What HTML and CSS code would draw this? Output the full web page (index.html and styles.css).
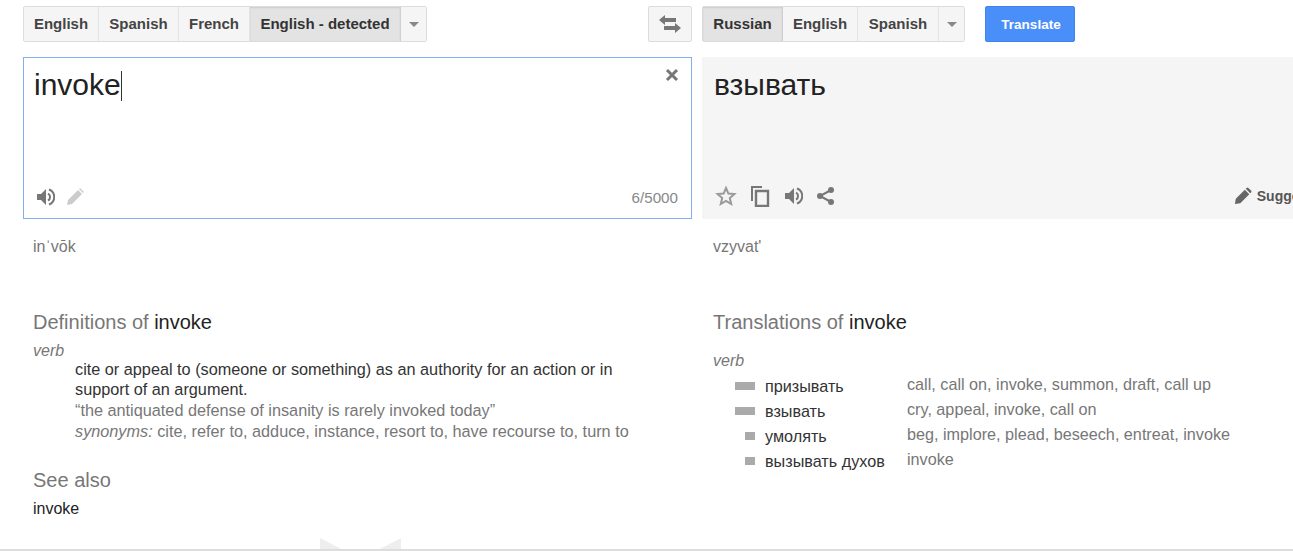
FILE: index.html
```html
<!DOCTYPE html>
<html lang="en">
<head>
    <meta charset="UTF-8">
    <meta name="viewport" content="width=device-width, initial-scale=1.0">
    <title>Translate</title>
    <link rel="stylesheet" href="styles.css">
</head>
<body>
    <div class="page">
        <div class="column column-left">
            <div class="toolbar toolbar-left">
                <div class="btn-group">
                    <button class="lang lang-en">English</button>
                    <button class="lang lang-es">Spanish</button>
                    <button class="lang lang-fr">French</button>
                    <button class="lang lang-detected active">English - detected</button>
                    <button class="lang lang-more"><span class="caret"></span></button>
                </div>
                <button class="swap">
                    <svg width="24" height="20" viewBox="0 0 24 20"><path fill="#777" d="M1 6l6-5v3h11v4H7v3z"/><path fill="#777" d="M23 14l-6-5v3H6v4h11v3z"/></svg>
                </button>
            </div>
            <div class="box box-source">
                <div class="box-text">invoke<span class="cursor"></span></div>
                <svg class="clear" width="14" height="14" viewBox="0 0 14 14"><path d="M2 2l10 10M12 2L2 12" stroke="#777" stroke-width="3"/></svg>
                <div class="box-foot">
                    <svg width="20" height="20" viewBox="0 0 20 20"><path fill="#777" d="M2 7v6h4l5 5V2L6 7z"/><path fill="none" stroke="#777" stroke-width="2" d="M13 6.5a4 4 0 0 1 0 7M14 2.5a8 8 0 0 1 0 15"/></svg>
                    <svg class="pencil-light" width="20" height="20" viewBox="0 0 20 20"><path fill="#ccc" d="M2 18l1-5L13 3l4 4L7 17zM14 2l1-1 4 4-1 1z"/></svg>
                    <span class="count">6/5000</span>
                </div>
            </div>
            <div class="phonetic">in<span class="stress">ˈ</span>vōk</div>
            <h3 class="section-title">Definitions of <b>invoke</b></h3>
            <div class="pos pos-def">verb</div>
            <div class="definition">
                <div class="gloss">cite or appeal to (someone or something) as an authority for an action or in support of an argument.</div>
                <div class="example">“the antiquated defense of insanity is rarely invoked today”</div>
                <div class="example"><i>synonyms:</i> cite, refer to, adduce, instance, resort to, have recourse to, turn to</div>
            </div>
            <h3 class="section-title see-also">See also</h3>
            <div class="see-word">invoke</div>
        </div>
        <div class="column column-right">
            <div class="toolbar">
                <div class="btn-group">
                    <button class="lang lang-ru active">Russian</button>
                    <button class="lang lang-en">English</button>
                    <button class="lang lang-es2">Spanish</button>
                    <button class="lang lang-more"><span class="caret"></span></button>
                </div>
                <button class="translate">Translate</button>
            </div>
            <div class="box box-result">
                <div class="box-text result-text">взывать</div>
                <div class="box-foot result-foot">
                    <svg width="22" height="22" viewBox="0 0 22 22"><path fill="#f5f5f5" stroke="#999" stroke-width="2" d="M11 3l2.400 5.600 6 .5-4.600 4 1.400 5.900-5.200-3.100L5.800 19l1.400-5.900-4.600-4 6-.5z"/></svg>
                    <svg width="22" height="22" viewBox="0 0 22 22"><path fill="none" stroke="#777" stroke-width="2" d="M3 16V2h10"/><path fill="none" stroke="#777" stroke-width="2.400" d="M7 6h12v15H7z"/></svg>
                    <svg width="20" height="20" viewBox="0 0 20 20"><path fill="#777" d="M2 7v6h4l5 5V2L6 7z"/><path fill="none" stroke="#777" stroke-width="2" d="M13 6.500a4 4 0 0 1 0 7M14 2.500a8 8 0 0 1 0 15"/></svg>
                    <svg width="20" height="20" viewBox="0 0 20 20"><path fill="none" stroke="#777" stroke-width="2" d="M16 4L5 10l11 6"/><circle cx="16" cy="4" r="3" fill="#777"/><circle cx="5" cy="10" r="3" fill="#777"/><circle cx="16" cy="16" r="3" fill="#777"/></svg>
                    <span class="suggest">
                        <svg width="18" height="18" viewBox="0 0 20 20"><path fill="#666" d="M1 19l1-6L12 3l5 5L7 18zM13 2l1-1a1.500 1.500 0 0 1 2 0l3 3a1.500 1.500 0 0 1 0 2l-1 1z"/></svg>
                        <b>Suggest an edit</b>
                    </span>
                </div>
            </div>
            <div class="phonetic">vzyvat'</div>
            <h3 class="section-title">Translations of <b>invoke</b></h3>
            <div class="pos pos-trans">verb</div>
            <div class="dict">
                <span class="bar bar-wide"></span><span class="word">призывать</span><span class="rev">call, call on, invoke, summon, draft, call up</span>
                <span class="bar bar-wide"></span><span class="word">взывать</span><span class="rev">cry, appeal, invoke, call on</span>
                <span class="bar"></span><span class="word">умолять</span><span class="rev">beg, implore, plead, beseech, entreat, invoke</span>
                <span class="bar"></span><span class="word">вызывать духов</span><span class="rev">invoke</span>
            </div>
        </div>
        <div class="chevron"></div>
    </div>
</body>
</html>
```

FILE: styles.css
```css
html, body {
    margin: 0;
    padding: 0;
    background: #fff;
    overflow: hidden;
}

body {
    font-family: "Liberation Sans", Arial, sans-serif;
    color: #222;
}

.page {
    position: relative;
    box-sizing: border-box;
    width: 1293px;
    height: 551px;
    overflow: hidden;
    padding: 6px 0 0 23px;
    display: flex;
    gap: 10px;
    border-bottom: 2px solid #ddd;
}

.column-left {
    width: 669px;
    flex: none;
}

.column-right {
    flex: none;
    width: 660px;
}

.toolbar {
    display: flex;
    height: 36px;
    margin-bottom: 15px;
}

.toolbar-left {
    justify-content: space-between;
}

.btn-group {
    display: flex;
    border: 1px solid #dcdcdc;
    border-radius: 2px;
    box-sizing: border-box;
    height: 36px;
}

button {
    font-family: "Liberation Sans", Arial, sans-serif;
    cursor: pointer;
    padding: 0;
}

.lang {
    font-size: 15px;
    font-weight: bold;
    color: #444;
    background: #f5f5f5;
    border: none;
    border-right: 1px solid #e3e3e3;
    padding-bottom: 2px;
}

.lang:last-child {
    border-right: none;
}

.lang.active {
    color: #333;
    background: #e3e3e3;
    border-right: 1px solid #d0d0d0;
    box-shadow: inset 0 1px 2px rgba(0,0,0,0.1);
}

.lang-en { width: 75px; }
.lang-es { width: 80px; }
.lang-fr { width: 71px; }
.lang-detected { width: 151px; }
.lang-more { width: 25px; }
.lang-ru { width: 80px; }
.lang-es2 { width: 81px; }

.caret {
    display: inline-block;
    border-left: 5px solid transparent;
    border-right: 5px solid transparent;
    border-top: 5px solid #888;
    vertical-align: middle;
}

.swap {
    width: 44px;
    height: 36px;
    background: #f5f5f5;
    border: 1px solid #dcdcdc;
    border-radius: 2px;
    display: flex;
    align-items: center;
    justify-content: center;
}

.translate {
    width: 90px;
    height: 36px;
    margin-left: 20px;
    padding-left: 2px;
    background: #4a8ef8;
    border: 1px solid #3f84f0;
    border-radius: 2px;
    color: #fff;
    font-size: 13.5px;
    font-weight: bold;
}

.box {
    position: relative;
    box-sizing: border-box;
    height: 162px;
}

.box-source {
    border: 1px solid #84aef0;
    padding: 9px 10px 0;
}

.box-result {
    background: #f5f5f5;
    padding: 10px 12px 0;
}

.box-text {
    font-size: 30px;
    line-height: 36px;
    color: #222;
}

.cursor {
    display: inline-block;
    width: 1px;
    height: 30px;
    background: #333;
    vertical-align: -6px;
}

.clear {
    position: absolute;
    top: 10px;
    right: 12px;
}

.box-foot {
    position: absolute;
    left: 11px;
    right: 13px;
    bottom: 11px;
    display: flex;
    align-items: center;
    gap: 10px;
    height: 20px;
}

.count {
    margin-left: auto;
    font-size: 15.2px;
    color: #888;
}

.result-foot {
    left: 13px;
    bottom: 13px;
    gap: 12px;
    width: 646px;
}

.suggest {
    margin-left: auto;
    flex: none;
    display: flex;
    align-items: center;
    gap: 5px;
    font-size: 14px;
    color: #555;
    white-space: nowrap;
}

.phonetic {
    font-size: 16px;
    line-height: 20px;
    color: #777;
    margin: 18px 0 0 10px;
    height: 73px;
}

.column-right .phonetic {
    margin-left: 11px;
}

.section-title {
    margin: 0 0 0 10px;
    font-size: 20px;
    line-height: 24px;
    font-weight: normal;
    color: #777;
}

.column-right .section-title {
    margin-left: 11px;
}

.section-title b {
    font-weight: normal;
    color: #222;
}

.pos {
    font-size: 16px;
    font-style: italic;
    color: #777;
    line-height: 20px;
}

.pos-def {
    margin: 7px 0 0 10px;
}

.pos-trans {
    margin: 17px 0 0 11px;
}

.definition {
    margin: -2px 0 0 52px;
    width: 570px;
    font-size: 16.25px;
    line-height: 20px;
}

.gloss {
    color: #333;
    line-height: 20px;
    margin-bottom: 1px;
}

.example {
    color: #777;
    line-height: 21px;
}

.see-also {
    margin-top: 26px;
}

.see-word {
    margin: 7px 0 0 10px;
    font-size: 16px;
    line-height: 20px;
}

.dict {
    display: grid;
    grid-template-columns: 20px 132px 1fr;
    column-gap: 10px;
    margin: 5px 0 0 33px;
    font-size: 16.2px;
    row-gap: 5px;
    align-items: center;
}

.bar {
    justify-self: end;
    width: 10px;
    height: 8px;
    background: #aaa;
}

.bar-wide {
    width: 20px;
}

.word {
    color: #333;
    line-height: 20px;
}

.rev {
    color: #777;
    line-height: 20px;
    margin-top: -4px;
}

.chevron {
    position: absolute;
    left: 320px;
    bottom: 0;
    width: 81px;
    height: 11px;
    background: #eee;
    clip-path: polygon(0 0, 26% 100%, 74% 100%, 100% 0, 100% 100%, 0 100%);
}
```
